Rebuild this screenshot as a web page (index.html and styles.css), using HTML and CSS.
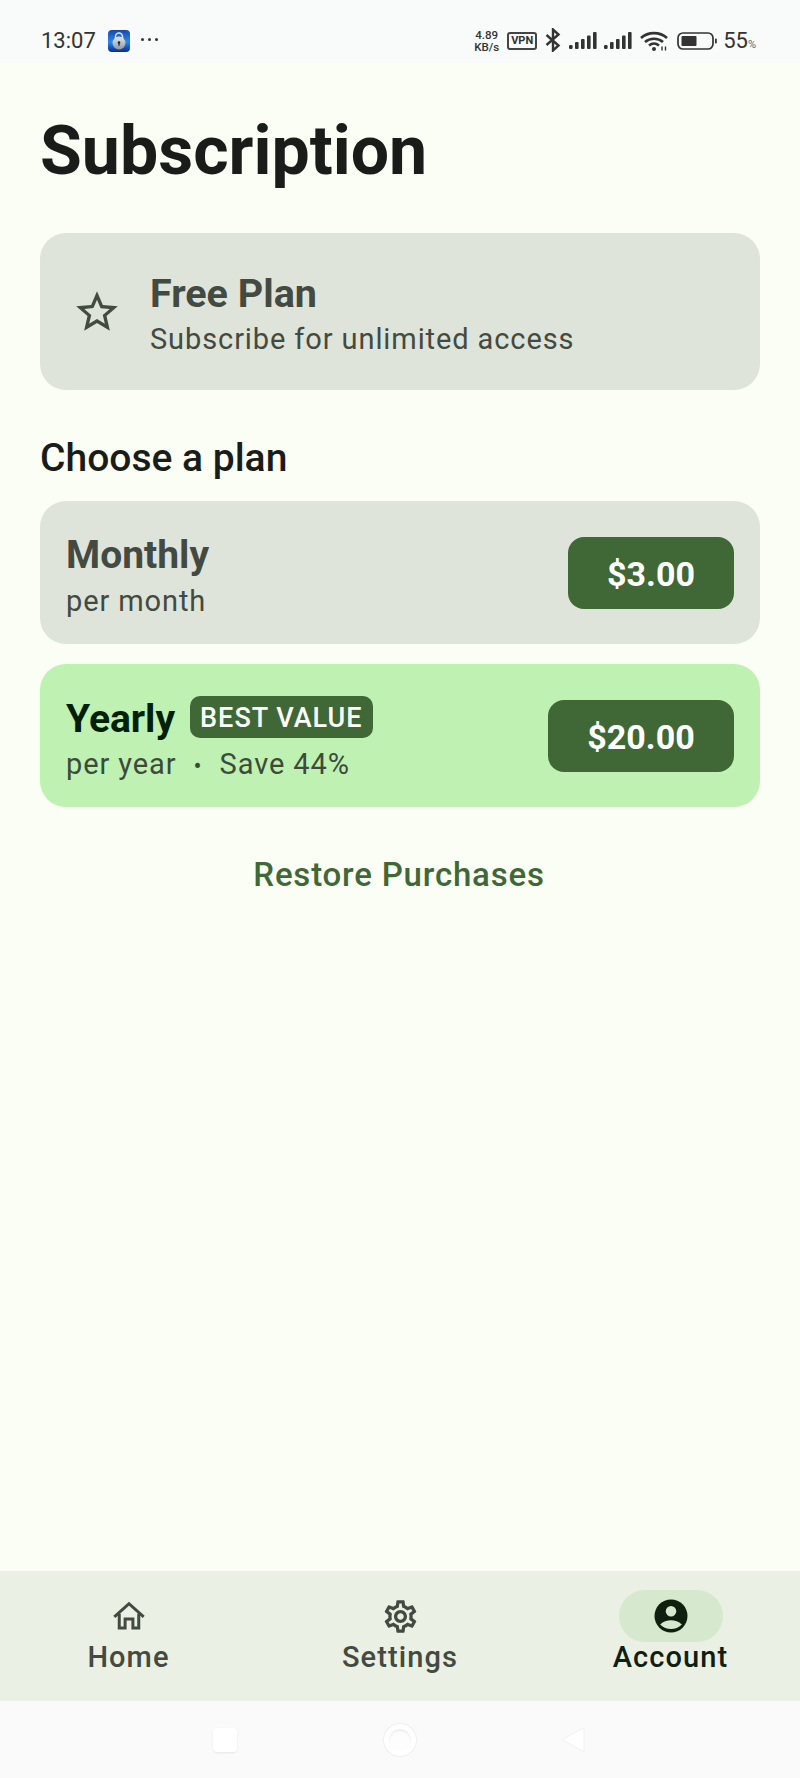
FILE: index.html
```html
<!DOCTYPE html>
<html lang="en">
<head>
  <meta charset="UTF-8" />
  <title>Subscription</title>
  <link rel="stylesheet" href="styles.css">
</head>
<body>
  <div class="status-bar">
    <div class="status-left">
      <span class="clock">13:07</span>
      <svg class="app-icon" width="22" height="22" viewBox="0 0 22 22">
        <defs>
          <linearGradient id="lockBg" x1="0" y1="0" x2="0" y2="1">
            <stop offset="0" stop-color="#1a46b0"/>
            <stop offset="0.55" stop-color="#2a8ae4"/>
            <stop offset="1" stop-color="#0b2c92"/>
          </linearGradient>
          <linearGradient id="lockBody" x1="0" y1="0" x2="0" y2="1">
            <stop offset="0" stop-color="#e4e8ea"/>
            <stop offset="1" stop-color="#8f98a2"/>
          </linearGradient>
        </defs>
        <rect width="22" height="22" rx="4" fill="url(#lockBg)"/>
        <path d="M7.500 9V6.500a3.500 3.500 0 0 1 7 0V9" fill="none" stroke="#e2e6ea" stroke-width="1.500"/>
        <circle cx="11" cy="13" r="6.500" fill="url(#lockBody)"/>
        <circle cx="11" cy="12.500" r="1.300" fill="#1d2630"/>
        <rect x="10.400" y="12.800" width="1.200" height="3" fill="#1d2630"/>
      </svg>
      <span class="more-dots"><i></i><i></i><i></i></span>
    </div>
    <div class="status-right">
      <span class="net-speed">4.89<br>KB/s</span>
      <span class="vpn">VPN</span>
      <svg class="bt" width="16" height="24" viewBox="0 0 16 24" fill="none" stroke="#333" stroke-width="2.400">
        <path d="M1.500 7l12 10.500L8 22.500v-21l5.500 5L1.500 17"/>
      </svg>
      <svg class="signal" width="28" height="17" viewBox="0 0 28 17" fill="#333">
        <rect x="0" y="13" width="3.600" height="4" rx="1.200"/>
        <rect x="6" y="10" width="3.600" height="7" rx="1"/>
        <rect x="12" y="7" width="3.600" height="10" rx="1"/>
        <rect x="18" y="3.500" width="3.600" height="13.500" rx="1"/>
        <rect x="24" y="0" width="3.600" height="17" rx="1"/>
      </svg>
      <svg class="signal signal-two" width="28" height="17" viewBox="0 0 28 17" fill="#333">
        <rect x="0" y="13" width="3.600" height="4" rx="1.200"/>
        <rect x="6" y="10" width="3.600" height="7" rx="1"/>
        <rect x="12" y="7" width="3.600" height="10" rx="1"/>
        <rect x="18" y="3.500" width="3.600" height="13.500" rx="1"/>
        <rect x="24" y="0" width="3.600" height="17" rx="1"/>
      </svg>
      <svg class="wifi" width="28" height="20" viewBox="0 0 28 20" fill="none" stroke="#333" stroke-width="2.600">
        <path d="M1 7C8 .5 20 .5 27 7"/>
        <path d="M5 11c5-4.400 13-4.400 18 0"/>
        <path d="M9 14.500c3-2.400 7-2.400 10 0"/>
        <circle cx="14" cy="18" r="2" fill="#333" stroke="none"/>
        <path d="M22 15.500v4M25.500 15.500v4" stroke-width="1.400"/>
      </svg>
      <svg class="batt" width="40" height="18" viewBox="0 0 40 18">
        <rect x="1" y="1" width="35" height="16" rx="5" fill="none" stroke="#333" stroke-width="1.700"/>
        <rect x="4.500" y="4" width="15" height="10" rx="1" fill="#333"/>
        <rect x="38" y="6.500" width="1.800" height="5" rx="0.800" fill="#333"/>
      </svg>
      <span class="battery">55<small>%</small></span>
    </div>
  </div>

  <main class="content">
    <h1 class="page-title">Subscription</h1>

    <section class="plan-status">
      <svg class="star" width="50" height="50" viewBox="0 0 24 24">
        <path d="M22 9.240l-7.190-.62L12 2 9.190 8.630 2 9.240l5.460 4.730L5.820 21 12 17.270 18.180 21l-1.630-7.030L22 9.240zM12 15.400l-3.760 2.270 1-4.280-3.320-2.880 4.380-.38L12 6.100l1.710 4.040 4.380.38-3.320 2.880 1 4.280L12 15.400z" fill="#434a42"/>
      </svg>
      <div class="status-text">
        <div class="status-title">Free Plan</div>
        <div class="status-sub">Subscribe for unlimited access</div>
      </div>
    </section>

    <h2 class="section-title">Choose a plan</h2>

    <div class="plan-card">
      <div class="plan-text">
        <div class="plan-name">Monthly</div>
        <div class="plan-sub">per month</div>
      </div>
      <div class="price">$3.00</div>
    </div>

    <div class="plan-card plan-best">
      <div class="plan-text">
        <div class="plan-head">
          <span class="plan-name">Yearly</span>
          <span class="badge">BEST VALUE</span>
        </div>
        <div class="plan-sub">per year <span class="dot">•</span> Save 44%</div>
      </div>
      <div class="price price-wide">$20.00</div>
    </div>

    <div class="restore">Restore Purchases</div>
  </main>

  <nav class="bottom-nav">
    <div class="nav-item">
      <div class="nav-icon">
        <svg width="36" height="36" viewBox="0 0 24 24" fill="none" stroke="#434a42" stroke-width="2">
          <path d="M2.200 12.600L12 3.800l9.800 8.800"/>
          <path d="M5.500 10.500V20h3.900v-6h5.200v6h3.900v-9.500"/>
        </svg>
      </div>
      <span class="nav-label">Home</span>
    </div>
    <div class="nav-item">
      <div class="nav-icon">
        <svg width="39" height="39" viewBox="0 0 24 24">
          <path d="M19.430 12.980c.04-.32.070-.640.070-.980s-.030-.660-.070-.980l2.110-1.650c.190-.150.240-.420.120-.640l-2-3.460c-.120-.220-.390-.300-.610-.220l-2.490 1c-.520-.400-1.080-.730-1.690-.980l-.380-2.650A.488.488 0 0 0 14 2h-4c-.250 0-.460.180-.490.420l-.380 2.650c-.610.250-1.170.590-1.690.980l-2.490-1c-.230-.090-.490 0-.610.220l-2 3.460c-.130.220-.070.490.120.640l2.110 1.650c-.040.320-.070.650-.070.980s.030.660.070.980l-2.110 1.650c-.190.150-.240.420-.120.640l2 3.460c.120.220.390.300.610.220l2.490-1c.520.400 1.080.730 1.690.980l.380 2.650c.030.240.240.420.490.420h4c.250 0 .460-.180.490-.420l.380-2.650c.610-.250 1.170-.590 1.690-.980l2.490 1c.230.090.490 0 .610-.220l2-3.460c.120-.220.070-.490-.120-.640l-2.110-1.650zM17.450 11.270c.040.310.050.520.050.730s-.020.430-.050.730l-.140 1.130.890.700 1.080.840-.700 1.210-1.270-.510-1.040-.420-.900.680c-.430.320-.840.560-1.250.730l-1.060.430-.160 1.130-.200 1.350h-1.400l-.190-1.350-.160-1.130-1.060-.430c-.430-.180-.830-.410-1.230-.710l-.910-.700-1.060.430-1.270.510-.700-1.210 1.080-.840.890-.700-.140-1.130c-.030-.310-.050-.540-.050-.740s.020-.430.050-.730l.140-1.130-.890-.700-1.080-.840.700-1.210 1.270.510 1.040.420.900-.680c.430-.320.840-.560 1.250-.730l1.060-.430.160-1.130.200-1.350h1.390l.190 1.350.160 1.130 1.060.430c.430.180.830.410 1.230.710l.910.700 1.060-.430 1.270-.510.700 1.210-1.070.850-.890.700.140 1.130zM12 8c-2.210 0-4 1.790-4 4s1.790 4 4 4 4-1.790 4-4-1.790-4-4-4zm0 6c-1.100 0-2-.900-2-2s.900-2 2-2 2 .900 2 2-.900 2-2 2z" fill="#434a42"/>
        </svg>
      </div>
      <span class="nav-label">Settings</span>
    </div>
    <div class="nav-item nav-active">
      <div class="nav-icon">
        <svg width="36" height="36" viewBox="0 0 24 24">
          <circle cx="12" cy="12" r="11" fill="#10200f"/>
          <circle cx="12" cy="8.800" r="3.500" fill="#d6e9cf"/>
          <path d="M4.800 17.600c4-3.600 10.400-3.600 14.400 0-4 4-10.400 4-14.400 0z" fill="#d6e9cf"/>
        </svg>
      </div>
      <span class="nav-label">Account</span>
    </div>
  </nav>

  <div class="system-nav">
    <span class="sys-square"></span>
    <span class="sys-circle"></span>
    <svg class="sys-back" width="26" height="28" viewBox="0 0 26 28">
      <path d="M24 2v24L2 13.500z" fill="#fff" stroke="#f1f1f1" stroke-width="1" stroke-linejoin="round"/>
    </svg>
  </div>
</body>
</html>
```

FILE: styles.css
```css
* {
  box-sizing: border-box;
}

body {
  font-family: Roboto, "Liberation Sans", sans-serif;
  background: #fbfef5;
  color: #191c18;
  margin: 0;
  width: 800px;
  height: 1778px;
  display: flex;
  flex-direction: column;
  overflow: hidden;
}

/* status bar */
.status-bar {
  height: 63px;
  background: #f9fafa;
  display: flex;
  justify-content: space-between;
  align-items: center;
  padding: 18px 44px 0 41px;
  color: #333;
}

.status-left,
.status-right {
  display: flex;
  align-items: center;
}

.clock {
  font-size: 22px;
  margin-right: 12px;
}

.more-dots {
  display: flex;
  gap: 4px;
  margin: -2px 0 0 11px;
}

.more-dots i {
  width: 3px;
  height: 3px;
  border-radius: 50%;
  background: #333;
}

.status-right {
  gap: 8px;
}

.net-speed {
  font-size: 11.500px;
  font-weight: 500;
  line-height: 12px;
  text-align: center;
}

.vpn {
  border: 2px solid #444;
  border-radius: 3px;
  font-size: 11px;
  font-weight: 700;
  line-height: 14px;
  padding: 0 2px;
}

.bt {
  margin-top: -2px;
}

.signal-two {
  margin-left: -1px;
}

.batt {
  margin-left: 1px;
}

.battery {
  font-size: 22px;
  margin-left: -2px;
}

.battery small {
  font-size: 11px;
  color: #666;
}

/* main content */
.content {
  flex: 1;
  padding: 0 40px;
}

.page-title {
  font-size: 68px;
  font-weight: 700;
  line-height: 76px;
  margin: 50px 0 0;
  color: #191c18;
}

.plan-status {
  height: 157px;
  margin-top: 44px;
  background: #dee4d9;
  border-radius: 26px;
  display: flex;
  align-items: center;
  padding: 0 32px;
  gap: 28px;
  color: #434a42;
}

.status-text {
  margin-top: 6px;
}

.status-title {
  font-size: 39.500px;
  font-weight: 700;
  line-height: 46px;
}

.status-sub {
  font-size: 29px;
  line-height: 38px;
  letter-spacing: 0.9px;
  margin-top: 3px;
}

.section-title {
  font-size: 39px;
  font-weight: 500;
  line-height: 46px;
  margin: 45px 0 0;
  color: #191c18;
}

.plan-card {
  height: 143px;
  margin-top: 20px;
  background: #dee4d9;
  border-radius: 26px;
  display: flex;
  justify-content: space-between;
  align-items: center;
  padding: 0 26px;
  color: #434a42;
}

.plan-best {
  background: #bff1b2;
  color: #3c4b3a;
}

.plan-text {
  margin-top: 4px;
}

.plan-best .plan-text {
  margin-top: 6px;
}

.plan-name {
  font-size: 39px;
  font-weight: 700;
  line-height: 48px;
}

.plan-best .plan-name {
  color: #022104;
}

.plan-sub {
  font-size: 29px;
  line-height: 36px;
  letter-spacing: 0.9px;
  margin-top: 4px;
}

.plan-best .plan-head {
  margin-top: 1px;
}

.plan-best .plan-sub {
  margin-top: 3px;
}

.dot {
  font-size: 24px;
  margin: 0 9px;
}

.plan-head {
  display: flex;
  align-items: center;
  gap: 15px;
}

.badge {
  background: #3f6836;
  color: #fff;
  border-radius: 10px;
  font-size: 27px;
  font-weight: 500;
  line-height: 44px;
  height: 42px;
  padding: 0 10px;
  letter-spacing: 1px;
  margin-bottom: 3px;
}

.price {
  width: 166px;
  height: 72px;
  background: #3f6836;
  color: #fff;
  border-radius: 16px;
  font-size: 34px;
  font-weight: 700;
  line-height: 74px;
  text-align: center;
}

.price-wide {
  width: 186px;
}

.restore {
  margin-top: 47px;
  padding-right: 2px;
  text-align: center;
  font-size: 33px;
  font-weight: 500;
  line-height: 42px;
  letter-spacing: 0.8px;
  color: #3f6836;
}

/* bottom navigation */
.bottom-nav {
  height: 130px;
  background: #eaf0e3;
  display: flex;
  justify-content: space-between;
}

.nav-item {
  width: 257px;
  display: flex;
  flex-direction: column;
  align-items: center;
  padding-top: 19px;
  color: #434a42;
}

.nav-icon {
  width: 104px;
  height: 52px;
  border-radius: 26px;
  display: flex;
  align-items: center;
  justify-content: center;
}

.nav-label {
  font-size: 29px;
  font-weight: 500;
  line-height: 36px;
  letter-spacing: 1.100px;
  margin-top: -3px;
}

.nav-active {
  color: #10200f;
  padding-right: 2px;
}

.nav-active .nav-icon {
  background: #d6e9cf;
}

/* android buttons */
.system-nav {
  height: 77px;
  background: #fafafa;
  display: flex;
  align-items: center;
}

.sys-square {
  width: 24px;
  height: 24px;
  margin-left: 213px;
  background: #fff;
  border-radius: 4px;
  box-shadow: 0 1px 2px rgba(0, 0, 0, 0.08);
}

.sys-circle {
  width: 32px;
  height: 32px;
  margin-left: 147px;
  border-radius: 50%;
  border: 5px solid #fff;
  background: #fdfdfd;
  box-shadow: 0 0 0 1px #efefef, inset 0 2px 2px #ececec;
}

.sys-back {
  margin-left: 144px;
}
```
